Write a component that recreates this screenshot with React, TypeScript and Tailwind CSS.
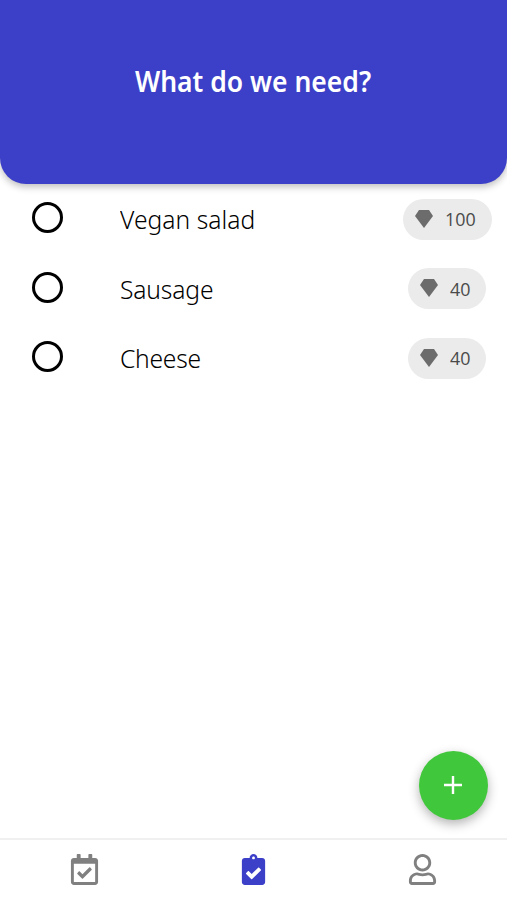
import React from 'react';
import { FaClipboardCheck, FaRegCalendarCheck, FaRegUser } from 'react-icons/fa';

const items = [
  { name: 'Vegan salad', points: 100, width: 'w-[89px]', tracking: 'tracking-[0.05px]' },
  { name: 'Sausage', points: 40, width: 'w-[78px]', tracking: 'tracking-[-0.15px]' },
  { name: 'Cheese', points: 40, width: 'w-[78px]', tracking: 'tracking-[-0.25px]' },
];

const Gem = () => (
  <svg className="mb-px h-[18px] w-[18px] shrink-0" viewBox="0 0 18 18" fill="#6c6c6c">
    <path d="M4 0H14L18 6L9 18L0 6Z" />
  </svg>
);

const App = () => {
  return (
    <div className="relative flex h-[900px] w-full flex-col overflow-hidden bg-white font-['Noto_Sans',sans-serif]">
      {/* Header */}
      <header className="flex h-[184px] shrink-0 justify-center rounded-b-[26px] bg-[#3c3fc7] pt-[62px] shadow-[0_3px_7px_rgba(0,0,0,0.25)]">
        <h1 className="origin-center scale-x-[0.93] whitespace-nowrap text-[28.5px] font-semibold leading-[38px] text-white">
          What do we need?
        </h1>
      </header>

      {/* Shopping list */}
      <ul className="flex flex-1 flex-col pt-[0.5px]">
        {items.map((item) => (
          <li key={item.name} className="flex h-[69.5px] items-center">
            <button className="mb-[3px] ml-8 h-[31px] w-[31px] rounded-full border-[3px] border-black" aria-label={item.name} />
            <span className={`ml-[57px] flex-1 origin-left scale-x-[0.965] text-[25.5px] font-light text-black ${item.tracking}`}>
              {item.name}
            </span>
            <div className="mr-[11px] flex w-[98px] justify-center">
              <div className={`flex h-[41px] shrink-0 items-center rounded-full bg-[#ebebeb] pl-3 ${item.width}`}>
                <Gem />
                <span className="ml-3 origin-left scale-x-[0.94] font-['Open_Sans',sans-serif] text-[19px] text-[#4a4a4a]">
                  {item.points}
                </span>
              </div>
            </div>
          </li>
        ))}
      </ul>

      {/* Add button */}
      <button className="absolute bottom-[80.5px] right-[19.5px] flex h-[69px] w-[69px] items-center justify-center rounded-full bg-[#40c73c] shadow-[0_4px_11px_rgba(0,0,0,0.3)]" aria-label="Add">
        <svg className="h-[18px] w-[18px]" viewBox="0 0 18 18" stroke="#fff" strokeWidth="2.4">
          <path d="M9 0V18M0 9H18" />
        </svg>
      </button>

      {/* Bottom navigation */}
      <nav className="grid h-[62px] shrink-0 grid-cols-3 items-center border-t-2 border-[#f0f0f0] pb-[2px] text-[31px] text-[#808080]">
        <FaRegCalendarCheck className="mx-auto" />
        <FaClipboardCheck className="mx-auto text-[#3c3fc7]" />
        <FaRegUser className="mx-auto" />
      </nav>
    </div>
  );
};

export default App;
